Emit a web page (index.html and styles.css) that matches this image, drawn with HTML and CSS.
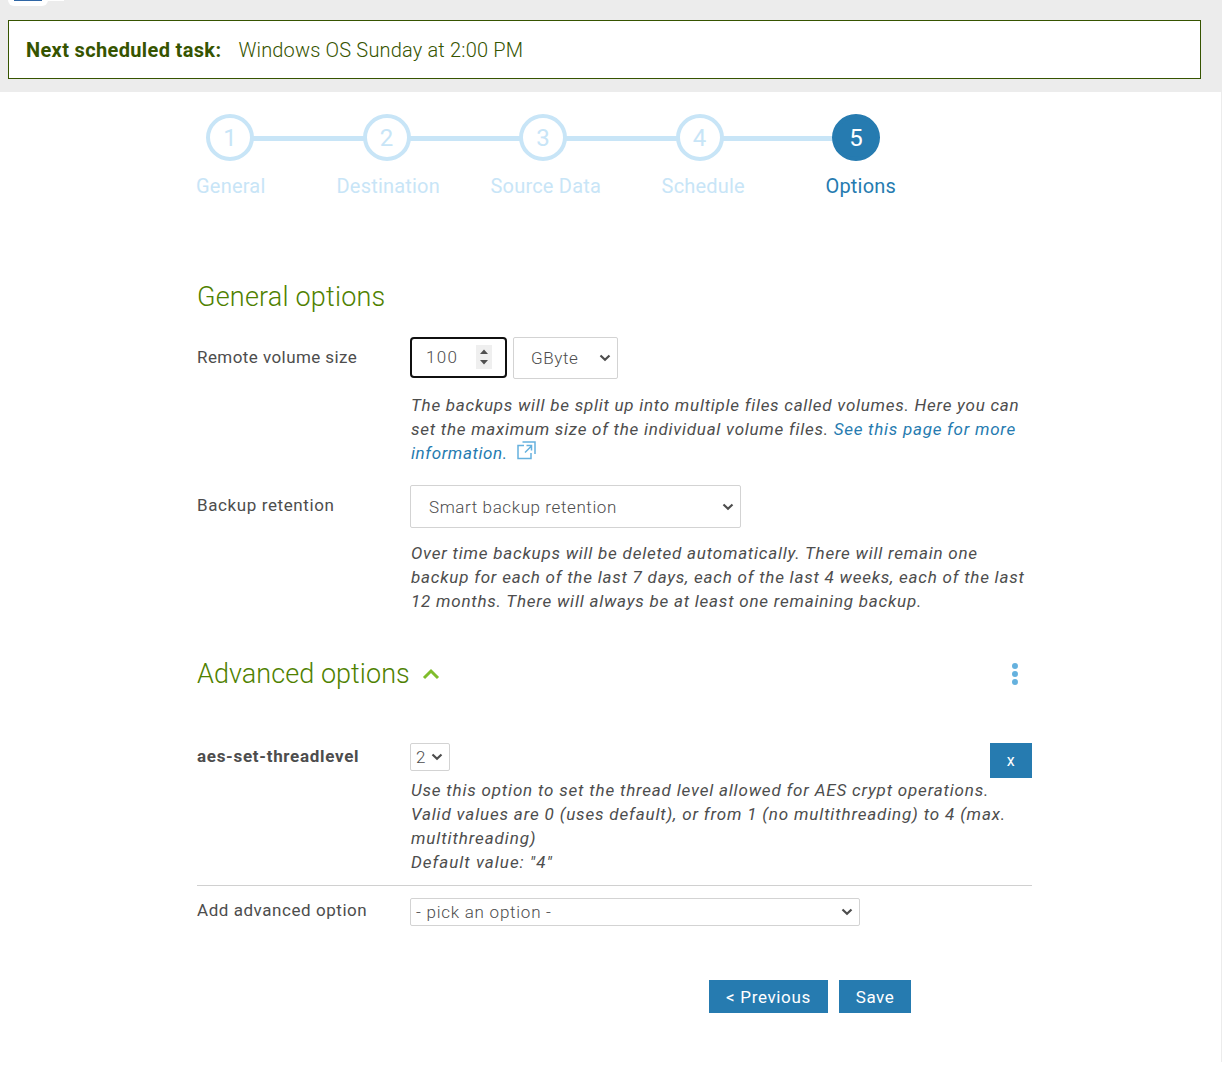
FILE: index.html
```html
<!DOCTYPE html>
<html lang="en">
<head>
<meta charset="utf-8">
<title>Backup options</title>
<link rel="stylesheet" href="styles.css">
</head>
<body>
<header class="top">
  <div class="tab"><span class="tab-logo"></span><span class="tab-tail"></span></div>
  <div class="notice"><strong>Next scheduled task:</strong><span>Windows OS Sunday at 2:00 PM</span></div>
</header>
<main class="page">
  <nav class="steps">
    <ol class="circles">
      <li>1</li><li>2</li><li>3</li><li>4</li><li class="active">5</li>
    </ol>
    <ol class="labels">
      <li>General</li><li>Destination</li><li>Source Data</li><li>Schedule</li><li class="active">Options</li>
    </ol>
  </nav>

  <h2 class="heading general">General options</h2>
  <section class="row volume">
    <label class="name size">Remote volume size</label>
    <div class="field">
      <div class="controls">
        <div class="number"><span>100</span>
          <svg class="spinner" width="16" height="24" viewBox="0 0 16 24"><rect width="16" height="24" fill="#efefef"/><path d="M4 9 8 4.500 12 9ZM4 15H12L8 19.500Z" fill="#505050"/></svg>
        </div>
        <div class="select unit"><span>GByte</span><svg class="chev" viewBox="0 0 12 8"><path d="M1.500 1.500 6 5.700 10.500 1.500"/></svg></div>
      </div>
      <p class="help"><span class="l1">The backups will be split up into multiple files called volumes. Here you can</span><br><span class="l2">set the maximum size of the individual volume files. <a>See this page for more</a></span><br><a>information.</a> <svg class="ext" width="19" height="19" viewBox="0 0 19 19"><path d="M7 4.500H1V17.500H14V12M5.500 1H18V13M8 11.500 14.500 5M9.500 4.500H14.500V9.500"/></svg></p>
    </div>
  </section>
  <section class="row retention">
    <label class="name">Backup retention</label>
    <div class="field">
      <div class="select keep"><span>Smart backup retention</span><svg class="chev" viewBox="0 0 12 8"><path d="M1.500 1.500 6 5.700 10.500 1.500"/></svg></div>
      <p class="help"><span class="l3">Over time backups will be deleted automatically. There will remain one</span><br><span class="l3">backup for each of the last 7 days, each of the last 4 weeks, each of the last</span><br><span class="l3">12 months. There will always be at least one remaining backup.</span></p>
    </div>
  </section>

  <div class="advanced">
    <h2 class="heading">Advanced options</h2>
    <svg class="up" width="18" height="12" viewBox="0 0 18 12"><path d="M2 10 9 3 16 10"/></svg>
    <svg class="dots" width="6" height="22" viewBox="0 0 6 22"><circle cx="3" cy="3" r="3"/><circle cx="3" cy="11" r="3"/><circle cx="3" cy="19" r="3"/></svg>
  </div>
  <section class="row thread">
    <label class="name strong">aes-set-threadlevel</label>
    <div class="field">
      <div class="select level"><span>2</span><svg class="chev" viewBox="0 0 12 8"><path d="M1.500 1.500 6 5.700 10.500 1.500"/></svg></div>
      <p class="help"><span class="l6">Use this option to set the thread level allowed for AES crypt operations.</span><br><span class="l7">Valid values are 0 (uses default), or from 1 (no multithreading) to 4 (max.</span><br><span class="l8">multithreading)</span><br><span class="l9">Default value: "4"</span></p>
    </div>
    <button class="btn remove">x</button>
  </section>
  <section class="row add">
    <label class="name">Add advanced option</label>
    <div class="select pick"><span>- pick an option -</span><svg class="chev" viewBox="0 0 12 8"><path d="M1.500 1.500 6 5.700 10.500 1.500"/></svg></div>
  </section>
  <div class="actions"><button class="btn prev">&lt; Previous</button><button class="btn save">Save</button></div>
</main>
</body>
</html>
```
FILE: styles.css
```css
* { box-sizing: border-box; }
body { margin: 0; background: #fff; color: #4d4d4d; font: 300 17px/24px Roboto, "Noto Sans", sans-serif; letter-spacing: .6px; overflow: hidden; }
h2, p, ol { margin: 0; padding: 0; font-weight: 300; }
ol { list-style: none; display: flex; }
span, label, a, strong { white-space: nowrap; }
.top { height: 92px; background: #ececec; padding-left: 8px; }
.tab { display: flex; height: 20px; align-items: flex-start; }
.tab-logo { width: 40px; height: 6px; background: #2f66a5; border: 6px solid #fff; border-top: 0; border-radius: 0 0 9px 9px; border-bottom-width: 5px; }
.tab-tail { width: 16px; height: 1px; background: #fff; }
.notice { width: 1193px; height: 59px; border: 1px solid #365400; background: #fff; color: #365400; padding-left: 17px; display: flex; align-items: center; gap: 17px; font-size: 20px; letter-spacing: .17px; }
.notice strong { font-weight: 700; letter-spacing: .35px; }
.page { width: 1222px; height: 970px; border-right: 1px solid #ececec; padding: 22px 0 0 197px; }
.steps { height: 162px; color: #c8e5f7; }
.circles { margin-left: 9px; width: 674px; height: 47px; justify-content: space-between; background: linear-gradient(#c8e5f7, #c8e5f7) 20px 22px / 640px 5px no-repeat; }
.circles li { width: 48px; height: 47px; border: 4px solid #c8e5f7; border-radius: 50%; background: #fff; display: flex; align-items: center; justify-content: center; font-size: 24px; font-weight: 400; letter-spacing: 0; }
.circles .active { color: #fff; background: #267bb0; border-color: #267bb0; }
.labels { margin: 13px 0 0 -45px; }
.labels li { width: 157.500px; text-align: center; font-size: 20px; font-weight: 400; letter-spacing: .2px; }
.labels .active { color: #267bb0; }
.heading { color: #4f8100; font-size: 27px; line-height: 32px; white-space: nowrap; letter-spacing: .05px; }
.general { padding-top: 5px; height: 61px; letter-spacing: .2px; }
.row { display: flex; width: 835px; }
.name { width: 213px; flex: none; font-weight: 400; padding-top: 8px; }
.size { letter-spacing: .43px; }
.strong { font-weight: 700; padding-top: 1px; letter-spacing: .7px; }
.volume { height: 148px; }
.retention { height: 163px; }
.controls { display: flex; gap: 6px; }
.number { width: 97px; height: 41px; border: 2px solid #101010; border-radius: 4px; padding: 0 13px 2px 14px; display: flex; align-items: center; justify-content: space-between; letter-spacing: 1.3px; }
.select { border: 1px solid #d3d3d3; border-radius: 2px; display: flex; align-items: center; justify-content: space-between; }
.chev { width: 12px; height: 8px; fill: none; stroke: #4d4d4d; stroke-width: 2.200; }
.unit { width: 105px; height: 42px; padding: 0 6px 0 17px; }
.keep { width: 331px; height: 43px; padding: 0 6px 0 18px; }
.help { font-style: italic; font-weight: 400; padding: 14px 0 0 1px; white-space: nowrap; }
.retention .help { padding-top: 13px; }
.help a { color: #267bb0; }
.l1, .l2 { letter-spacing: .74px; }
.l3 { letter-spacing: .77px; }
.l6 { letter-spacing: .81px; }
.l7 { letter-spacing: .84px; }
.l8 { letter-spacing: .9px; }
.l9 { letter-spacing: 1px; }
.ext { fill: none; stroke: #65b1de; stroke-width: 1.500; vertical-align: -1px; margin: -4px 0 0 4px; }
.advanced { display: flex; height: 95px; padding-top: 10px; align-items: flex-start; }
.up { fill: none; stroke: #7fbd2b; stroke-width: 3; margin: 10px 0 0 12px; }
.dots { fill: #65b1de; margin: 5px 0 0 auto; }
.advanced { width: 821px; }
.thread { height: 143px; border-bottom: 1px solid #d0d0d0; }
.thread .field { width: 580px; }
.thread .help { padding-top: 7px; }
.level { width: 40px; height: 28px; padding: 0 6px 0 5px; }
.add { padding-top: 12px; }
.add .name { padding-top: 0; letter-spacing: .55px; }
.pick { width: 450px; height: 28px; padding: 0 6px 0 5px; letter-spacing: .75px; }
.btn { background: #267bb0; color: #fff; border: 0; padding: 0; font: 400 17px/24px Roboto, "Noto Sans", sans-serif; letter-spacing: .5px; }
.remove { width: 42px; height: 35px; font-size: 16px; }
.actions { display: flex; gap: 11px; padding: 54px 0 0 512px; }
.prev { width: 119px; height: 33px; letter-spacing: .65px; }
.save { width: 72px; height: 33px; }
```
